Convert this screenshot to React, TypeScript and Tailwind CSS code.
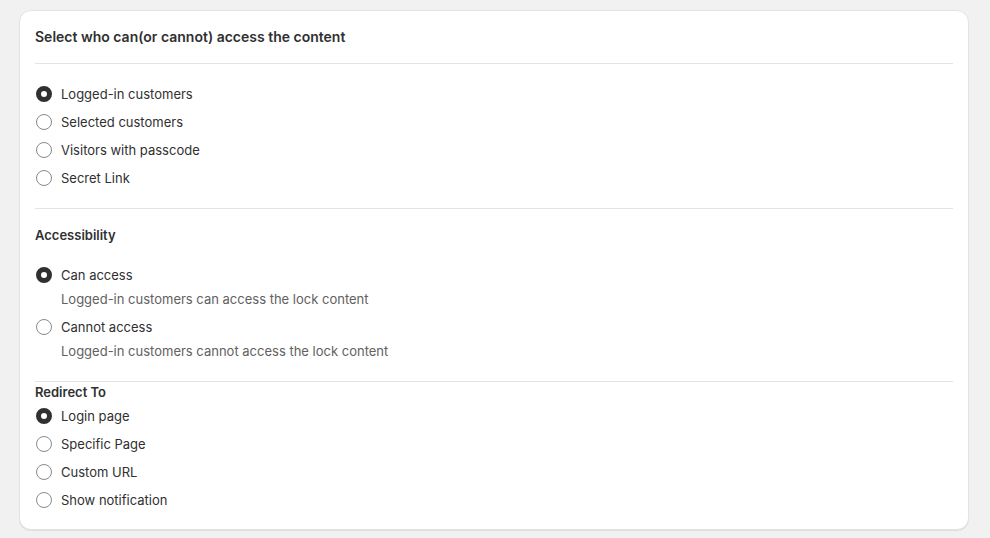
import { useState } from "react";

type Option = { value: string; label: string; help?: string };

const whoOptions: Option[] = [
  { value: "logged", label: "Logged-in customers" },
  { value: "selected", label: "Selected customers" },
  { value: "passcode", label: "Visitors with passcode" },
  { value: "secret", label: "Secret Link" },
];

const accessOptions: Option[] = [
  { value: "can", label: "Can access", help: "Logged-in customers can access the lock content" },
  { value: "cannot", label: "Cannot access", help: "Logged-in customers cannot access the lock content" },
];

const redirectOptions: Option[] = [
  { value: "login", label: "Login page" },
  { value: "page", label: "Specific Page" },
  { value: "url", label: "Custom URL" },
  { value: "notify", label: "Show notification" },
];

function RadioList({
  options,
  value,
  onChange,
  className = "",
}: {
  options: Option[];
  value: string;
  onChange: (v: string) => void;
  className?: string;
}) {
  return (
    <div className={`flex flex-col gap-2 ${className}`}>
      {options.map((o) => {
        const checked = o.value === value;
        return (
          <div key={o.value} className="flex flex-col gap-1">
            <button
              onClick={() => onChange(o.value)}
              className="flex h-5 items-center gap-[9px] text-left text-[13px] leading-5 text-[#303030]"
            >
              <span
                className={`ml-[1px] box-border h-4 w-4 shrink-0 rounded-full bg-white ${
                  checked ? "border-[5px] border-[#303030]" : "border border-[#8a8a8a]"
                }`}
              />
              {o.label}
            </button>
            {o.help && <p className="pl-[26px] text-[13px] leading-5 text-[#616161]">{o.help}</p>}
          </div>
        );
      })}
    </div>
  );
}

export default function App() {
  const [who, setWho] = useState("logged");
  const [access, setAccess] = useState("can");
  const [redirect, setRedirect] = useState("login");

  return (
    <div className="min-h-[538px] bg-[#f1f1f1] pt-[10px] font-['Inter',sans-serif]">
      <div className="ml-[19px] w-[950px] rounded-xl border border-[#e3e3e3] bg-white px-[15px] pb-[19px] shadow-[0_1px_0_0_rgba(0,0,0,0.08)]">
        <h2 className="pt-4 pb-4 text-sm leading-5 font-semibold text-[#303030]">
          Select who can(or cannot) access the content
        </h2>
        <div className="h-px bg-[#e3e3e3]" />
        <RadioList options={whoOptions} value={who} onChange={setWho} className="py-5" />
        <div className="h-px bg-[#e3e3e3]" />
        <h3 className="pt-4 text-[13px] leading-5 font-semibold text-[#303030]">Accessibility</h3>
        <RadioList options={accessOptions} value={access} onChange={setAccess} className="pt-5 pb-5" />
        <div className="h-px bg-[#e3e3e3]" />
        <h3 className="text-[13px] leading-5 font-semibold text-[#303030]">Redirect To</h3>
        <RadioList options={redirectOptions} value={redirect} onChange={setRedirect} className="pt-1" />
      </div>
    </div>
  );
}
